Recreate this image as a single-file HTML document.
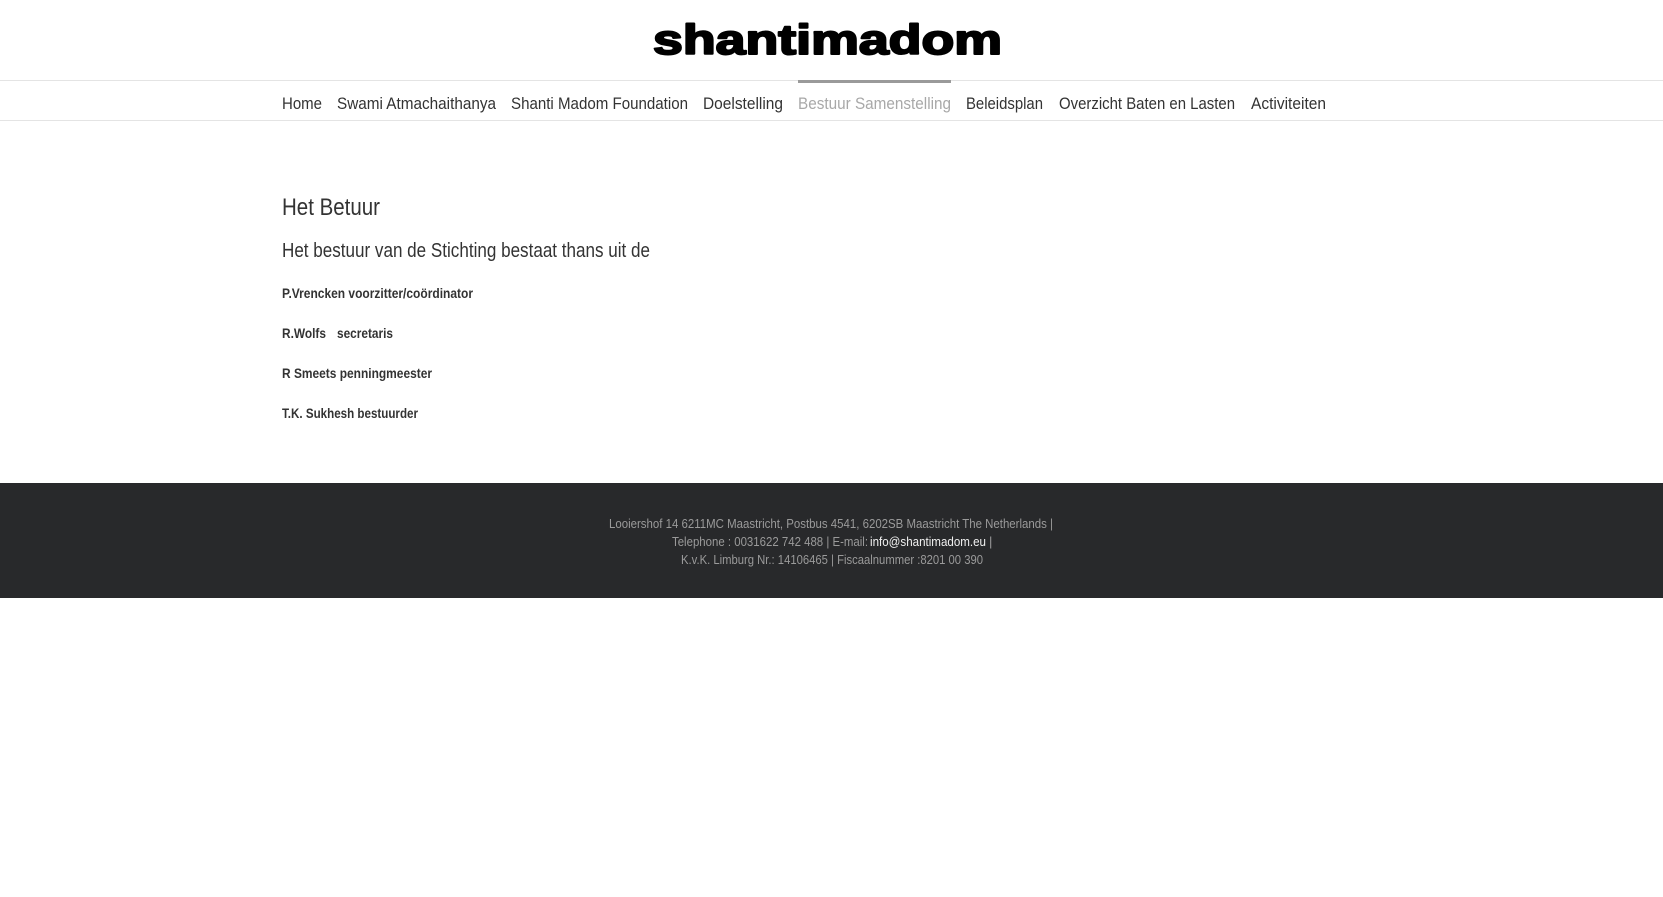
<!DOCTYPE html>
<html><head><meta charset="utf-8"><style>
html,body{margin:0;padding:0;background:#fff;width:1663px;height:897px;overflow:hidden}
svg{display:block}
text{font-family:"Liberation Sans",sans-serif}
</style></head><body>
<svg width="1663" height="897" viewBox="0 0 1663 897" xmlns="http://www.w3.org/2000/svg">
<rect width="1663" height="897" fill="#fff"/>
<text x="653" y="54" font-size="42" font-weight="bold" fill="#000" stroke="#000" stroke-width="2" stroke-linejoin="round" textLength="349" lengthAdjust="spacingAndGlyphs">shantimadom</text>
<rect x="0" y="80" width="1663" height="1" fill="#e4e4e4"/>
<rect x="0" y="120" width="1663" height="1" fill="#e4e4e4"/>
<rect x="798" y="80" width="153" height="3" fill="#9a9a9a"/>
<g font-size="17" fill="#333">
<text x="282" y="109" textLength="40" lengthAdjust="spacingAndGlyphs">Home</text>
<text x="337" y="109" textLength="159" lengthAdjust="spacingAndGlyphs">Swami Atmachaithanya</text>
<text x="511" y="109" textLength="177" lengthAdjust="spacingAndGlyphs">Shanti Madom Foundation</text>
<text x="703" y="109" textLength="80" lengthAdjust="spacingAndGlyphs">Doelstelling</text>
<text x="798" y="109" textLength="153" lengthAdjust="spacingAndGlyphs" fill="#a8a8a8">Bestuur Samenstelling</text>
<text x="966" y="109" textLength="77" lengthAdjust="spacingAndGlyphs">Beleidsplan</text>
<text x="1059" y="109" textLength="176" lengthAdjust="spacingAndGlyphs">Overzicht Baten en Lasten</text>
<text x="1251" y="109" textLength="75" lengthAdjust="spacingAndGlyphs">Activiteiten</text>
</g>
<text x="282" y="215" font-size="24" fill="#333" textLength="98" lengthAdjust="spacingAndGlyphs">Het Betuur</text>
<text x="282" y="257" font-size="20" fill="#333" textLength="368" lengthAdjust="spacingAndGlyphs">Het bestuur van de Stichting bestaat thans uit de</text>
<g font-size="14" font-weight="bold" fill="#333">
<text x="282" y="298" textLength="191" lengthAdjust="spacingAndGlyphs">P.Vrencken  voorzitter/coördinator</text>
<text x="282" y="338" textLength="44" lengthAdjust="spacingAndGlyphs">R.Wolfs</text>
<text x="337" y="338" textLength="56" lengthAdjust="spacingAndGlyphs">secretaris</text>
<text x="282" y="378" textLength="150" lengthAdjust="spacingAndGlyphs">R Smeets  penningmeester</text>
<text x="282" y="418" textLength="136" lengthAdjust="spacingAndGlyphs">T.K. Sukhesh bestuurder</text>
</g>
<rect x="0" y="483" width="1663" height="115" fill="#28292b"/>
<g font-size="13" fill="#9a9a9a">
<text x="609" y="528" textLength="444" lengthAdjust="spacingAndGlyphs">Looiershof 14 6211MC Maastricht, Postbus 4541, 6202SB Maastricht The Netherlands |</text>
<text x="672" y="546" textLength="196" lengthAdjust="spacingAndGlyphs">Telephone : 0031622 742 488 | E-mail:</text>
<text x="870" y="546" textLength="116" lengthAdjust="spacingAndGlyphs" fill="#f0f0f0">info@shantimadom.eu</text>
<text x="989" y="546">|</text>
<text x="681" y="564" textLength="302" lengthAdjust="spacingAndGlyphs">K.v.K. Limburg Nr.: 14106465 | Fiscaalnummer :8201 00 390</text>
</g>
</svg>
</body></html>
